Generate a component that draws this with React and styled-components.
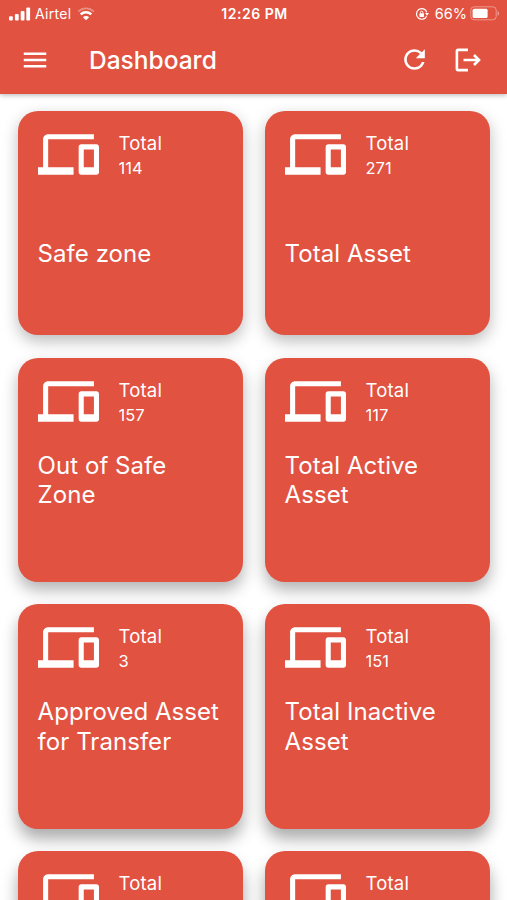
import styled, { createGlobalStyle } from "styled-components";
import { MdDevices, MdMenu, MdRefresh } from "react-icons/md";

const assets = [
  { id: 1, label: "Safe zone", total: 114 },
  { id: 2, label: "Total Asset", total: 271 },
  { id: 3, label: "Out of Safe Zone", total: 157, wrap: true },
  { id: 4, label: "Total Active Asset", total: 117, wrap: true },
  { id: 5, label: "Approved Asset for Transfer", total: 3, wrap: true },
  { id: 6, label: "Total Inactive Asset", total: 151, wrap: true },
  { id: 7 },
  { id: 8 },
];

const SignalIcon = () => (
  <svg width="22" height="14" viewBox="0 0 22 14" fill="#fff">
    <rect x="0" y="9.2" width="3.8" height="4.2" rx="1" />
    <rect x="5.9" y="7" width="3.8" height="6.4" rx="1" />
    <rect x="11.7" y="4" width="3.8" height="9.4" rx="1" />
    <rect x="17.3" y="0.5" width="3.8" height="12.9" rx="1" />
  </svg>
);

const WifiIcon = () => (
  <svg width="18" height="14" viewBox="0 0 18 14" fill="none" stroke="#fff">
    <path d="M1.2 4.6C5.6 .4 12.4 .4 16.8 4.6" strokeWidth="1.8" opacity=".35" />
    <path d="M3.7 7.4C6.6 4.6 11.4 4.6 14.3 7.4" strokeWidth="2.5" />
    <path d="M9 13.2L5.9 10.2C7.6 8.6 10.4 8.6 12.1 10.2Z" fill="#fff" stroke="none" />
  </svg>
);

const RotationLockIcon = () => (
  <svg width="14" height="14" viewBox="0 0 14 14" fill="none" stroke="#fff">
    <path d="M11.6 9.2A5.3 5.3 0 1 1 11.8 5.2" strokeWidth="1.2" />
    <path d="M10 6H14L12 8.7Z" fill="#fff" stroke="none" />
    <rect x="4.4" y="6.3" width="4.6" height="3.6" rx=".6" fill="#fff" stroke="none" />
    <path d="M5.5 6.5V5.3A1.2 1.2 0 0 1 7.9 5.3V6.5" strokeWidth=".9" />
  </svg>
);

const BatteryIcon = () => (
  <svg width="30" height="15" viewBox="0 0 30 15" fill="none">
    <rect x=".8" y=".8" width="25.4" height="13" rx="3.4" stroke="#fff" strokeOpacity=".4" />
    <rect x="2.6" y="2.7" width="15" height="9.2" rx="1.5" fill="#fff" />
    <path d="M27.6 5V9.8C29.4 9.1 29.4 5.7 27.6 5Z" fill="#fff" fillOpacity=".5" />
  </svg>
);

const LogoutIcon = () => (
  <svg width="26" height="24" viewBox="0 0 26 24" fill="none" stroke="#fff" strokeWidth="2.6">
    <path d="M13 1.9H3.1Q1.9 1.9 1.9 3.1V20.9Q1.9 22.1 3.1 22.1H13" />
    <path d="M8.5 12H24M19 7L24 12L19 17" />
  </svg>
);

const App = () => {
  return (
    <Screen>
      <GlobalStyle />
      <Header>
        <StatusBar>
          <StatusGroup>
            <SignalIcon />
            <Carrier>Airtel</Carrier>
            <WifiIcon />
          </StatusGroup>
          <Time>12:26 PM</Time>
          <StatusGroup $end>
            <RotationLockIcon />
            <Battery>66%</Battery>
            <BatteryIcon />
          </StatusGroup>
        </StatusBar>
        <Toolbar>
          <IconButton aria-label="Menu">
            <MdMenu size={30} />
          </IconButton>
          <Heading>Dashboard</Heading>
          <Actions>
            <IconButton aria-label="Refresh">
              <MdRefresh size={31} />
            </IconButton>
            <IconButton aria-label="Log out">
              <LogoutIcon />
            </IconButton>
          </Actions>
        </Toolbar>
      </Header>
      <Grid>
        {assets.map((asset, index) => (
          <Card key={asset.id} $depth={Math.floor(index / 2)}>
            <CardTop>
              <MdDevices size={61} />
              <Stats>
                <Total>Total</Total>
                {asset.total && <Count>{asset.total}</Count>}
              </Stats>
            </CardTop>
            {asset.label && <Label $wrap={asset.wrap}>{asset.label}</Label>}
          </Card>
        ))}
      </Grid>
    </Screen>
  );
};

const GlobalStyle = createGlobalStyle`
  * {
    box-sizing: border-box;
  }
  body {
    margin: 0;
    background: #fff;
    font-family: Inter, "Liberation Sans", sans-serif;
    overflow: hidden;
  }
`;

const Screen = styled.div`
  height: 900px;
  overflow: hidden;
  color: #fff;
`;

const Header = styled.header`
  position: relative;
  height: 93.5px;
  background: #e15241;
  box-shadow: 0 1px 5px rgba(0, 0, 0, 0.3);
`;

const StatusBar = styled.div`
  display: grid;
  grid-template-columns: 1fr auto 1fr;
  align-items: center;
  height: 27px;
  padding: 0 7px 0 9px;
`;

const StatusGroup = styled.div`
  display: flex;
  align-items: center;
  justify-content: ${({ $end }) => ($end ? "flex-end" : "flex-start")};
  svg {
    flex: none;
  }
`;

const Carrier = styled.span`
  margin: 0 6px 0 4px;
  font-size: 14px;
  letter-spacing: 0.3px;
`;

const Time = styled.span`
  font-size: 14px;
  font-weight: 600;
  letter-spacing: 0.5px;
`;

const Battery = styled.span`
  margin: 0 3px 0 6px;
  font-size: 14.5px;
`;

const Toolbar = styled.div`
  display: flex;
  align-items: center;
  height: 65px;
  padding: 0 26.5px 0 20px;
`;

const IconButton = styled.button`
  display: flex;
  padding: 0;
  border: 0;
  background: none;
  color: #fff;
`;

const Heading = styled.h1`
  margin: 0 0 0 39px;
  font-size: 24.5px;
  font-weight: 500;
`;

const Actions = styled.div`
  display: flex;
  align-items: center;
  gap: 25px;
  margin-left: auto;
`;

const Grid = styled.main`
  display: grid;
  grid-template-columns: repeat(2, 225px);
  grid-auto-rows: 224.6px;
  gap: 22.2px 22px;
  padding: 17.4px 18px;
`;

const Card = styled.article`
  padding: 13px 18px 0 19.6px;
  border-radius: 20px;
  background: #e15241;
  box-shadow: 0 ${({ $depth }) => 6 + $depth * 2}px 16px
    rgba(0, 0, 0, ${({ $depth }) => 0.27 + $depth * 0.03});
`;

const CardTop = styled.div`
  display: flex;
  height: 62px;
`;

const Stats = styled.div`
  display: flex;
  flex-direction: column;
  padding: 6px 0 0 19.9px;
`;

const Total = styled.span`
  font-size: 18.5px;
  line-height: 26px;
  letter-spacing: 0.2px;
`;

const Count = styled.span`
  font-size: 16.5px;
  line-height: 24px;
`;

const Label = styled.h2`
  margin: ${({ $wrap }) => ($wrap ? "18px" : "53px")} 0 0;
  font-size: 24px;
  font-weight: 400;
  line-height: 29.3px;
  letter-spacing: 0.05px;
`;

export default App;
